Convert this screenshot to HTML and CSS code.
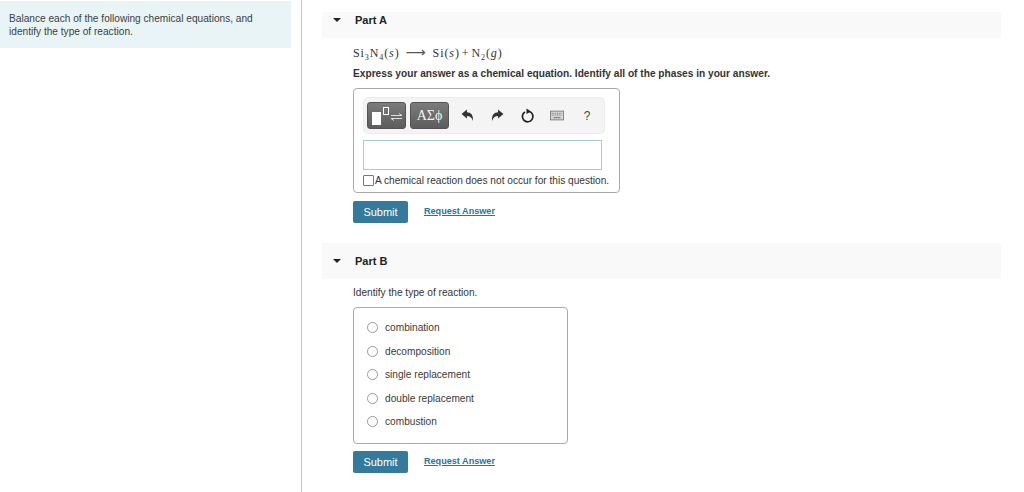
FILE: index.html
```html
<!DOCTYPE html>
<html>
<head>
  <title>Balance Chemical Equations</title>
  <link rel="stylesheet" href="styles.css">
</head>
<body>

<div class="page">
  <div class="sidebar">
    <div class="intro">Balance each of the following chemical equations, and identify the type of reaction.</div>
  </div>

  <div class="main">
    <div class="part-header part-header-a">
      <span class="caret"></span>
      <h3>Part A</h3>
    </div>
    <div class="part-body">
      <p class="equation">Si<sub>3</sub>N<sub>4</sub>(<i>s</i>)<span class="arrow">⟶</span>Si(<i>s</i>)<span class="plus">+</span>N<sub>2</sub>(<i>g</i>)</p>
      <p class="prompt">Express your answer as a chemical equation. Identify all of the phases in your answer.</p>

      <div class="answer-box">
        <div class="toolbar">
          <button class="tool-btn tool-btn-wide">
            <svg width="34" height="18" viewBox="0 0 34 18">
              <rect x="2" y="5" width="9" height="13" fill="#fff"/>
              <rect x="13.5" y="0.5" width="5" height="7" fill="none" stroke="#fff"/>
              <path d="M21 8.500h11l-3-2M32 11.500H21l3 2" fill="none" stroke="#ddd" stroke-width="1"/>
            </svg>
          </button>
          <button class="tool-btn tool-btn-greek">ΑΣϕ</button>
          <span class="tool-icon tool-undo">
            <svg width="13" height="13" viewBox="0 0 12 12"><path d="M0.500 4.500L5.500 0.500V3C9 3 11.500 5.500 11 11C10 8 8.500 6.500 5.500 6.500V8.800Z" fill="#333"/></svg>
          </span>
          <span class="tool-icon tool-redo">
            <svg width="13" height="13" viewBox="0 0 12 12"><path d="M11.500 4.500L6.500 0.500V3C3 3 0.500 5.500 1 11C2 8 3.500 6.500 6.500 6.500V8.800Z" fill="#333"/></svg>
          </span>
          <span class="tool-icon tool-reset">
            <svg width="14" height="16" viewBox="0 0 14 16"><path d="M8.500 3.500A5.300 5.300 0 1 1 4 3.900" fill="none" stroke="#222" stroke-width="1.700"/><path d="M5.500 0.500L10 3.400L5.500 6Z" fill="#222"/></svg>
          </span>
          <span class="tool-icon tool-keys">
            <svg width="16" height="11" viewBox="0 0 16 11"><rect x="0.500" y="0.500" width="15" height="10" fill="#d6d6d6" stroke="#777"/><path d="M2 3h12M2 5h12" stroke="#666" stroke-dasharray="1 1"/><path d="M4 8h8" stroke="#666"/></svg>
          </span>
          <span class="tool-icon tool-help">?</span>
        </div>
        <div class="answer-input"></div>
        <label class="no-reaction"><span class="checkbox"></span>A chemical reaction does not occur for this question.</label>
      </div>

      <div class="actions">
        <button class="submit">Submit</button>
        <a class="request" href="#">Request Answer</a>
      </div>
    </div>

    <div class="part-header part-header-b">
      <span class="caret"></span>
      <h3>Part B</h3>
    </div>
    <div class="part-body">
      <p class="identify">Identify the type of reaction.</p>

      <ul class="choices">
        <li><span class="radio"></span>combination</li>
        <li><span class="radio"></span>decomposition</li>
        <li><span class="radio"></span>single replacement</li>
        <li><span class="radio"></span>double replacement</li>
        <li><span class="radio"></span>combustion</li>
      </ul>

      <div class="actions actions-b">
        <button class="submit">Submit</button>
        <a class="request" href="#">Request Answer</a>
      </div>
    </div>
  </div>
</div>

</body>
</html>
```

FILE: styles.css
```css
body {
  margin: 0;
  font-family: "Liberation Sans", Arial, sans-serif;
  font-size: 10.15px;
  color: #333;
  background-color: #fff;
  overflow: hidden;
}

.page {
  display: flex;
  height: 492px;
}

.sidebar {
  width: 302px;
  flex-shrink: 0;
  padding-top: 1px;
  box-sizing: border-box;
  border-right: 1px solid #c4c8cc;
}

.intro {
  width: 291px;
  height: 47px;
  box-sizing: border-box;
  padding: 12px 30px 0 9px;
  background-color: #e8f4f6;
  line-height: 12.5px;
  color: #3a3f44;
}

.main {
  width: 679px;
  margin-left: 20px;
  padding-top: 12px;
}

.part-header {
  display: flex;
  align-items: flex-start;
  background-color: #f9f9f9;
  padding-left: 11px;
}

.part-header-a {
  height: 26px;
  padding-top: 2px;
  box-sizing: border-box;
}

.part-header-b {
  height: 36px;
  margin-top: 20px;
  padding-top: 12px;
  box-sizing: border-box;
}

.part-header h3 {
  margin: 0 0 0 14px;
  font-size: 11px;
  line-height: 13px;
  color: #222;
}

.caret {
  width: 0;
  height: 0;
  margin-top: 4px;
  border-left: 4px solid transparent;
  border-right: 4px solid transparent;
  border-top: 4px solid #222;
}

.part-body {
  padding-left: 31px;
}

.equation {
  margin: 0;
  padding-top: 8px;
  height: 23px;
  box-sizing: border-box;
  font-family: "Liberation Serif", serif;
  font-size: 12px;
  letter-spacing: 0.9px;
  line-height: 15px;
  color: #333;
  white-space: nowrap;
}

.equation sub {
  font-size: 8px;
  line-height: 0;
}

.arrow {
  display: inline-block;
  width: 20px;
  margin: 0 7px 0 6px;
  font-family: "DejaVu Sans", sans-serif;
  font-size: 14px;
  line-height: 0;
  letter-spacing: 0;
  color: #555;
}

.plus {
  margin: 0 2px;
}

.prompt {
  margin: 0;
  padding-top: 7px;
  font-size: 10.17px;
  font-weight: bold;
  line-height: 12px;
  color: #333;
}

.answer-box {
  width: 267px;
  height: 105px;
  margin-top: 8px;
  padding: 8px 0 0 9px;
  box-sizing: border-box;
  border: 1px solid #aaa;
  border-radius: 4px;
}

.toolbar {
  display: flex;
  align-items: center;
  width: 242px;
  height: 37px;
  box-sizing: border-box;
  padding-left: 3px;
  background-color: #f4f4f4;
  border: 1px solid #ececec;
  border-radius: 5px;
}

.tool-btn {
  height: 27px;
  padding: 0;
  margin-right: 4px;
  border: 1px solid #555;
  border-radius: 3px;
  background: linear-gradient(#7b7b7b, #5d5d5d);
  color: #f2f2f2;
  font-family: "Liberation Serif", serif;
  font-size: 14px;
}

.tool-btn-wide {
  width: 39px;
  display: flex;
  align-items: center;
  justify-content: center;
}

.tool-btn-greek {
  width: 39px;
}

.tool-icon {
  display: flex;
  justify-content: center;
  align-items: center;
  width: 14px;
  color: #444;
}

.tool-undo {
  margin-left: 7px;
}

.tool-redo {
  margin-left: 16px;
}

.tool-reset {
  margin-left: 17px;
}

.tool-keys {
  margin-left: 15px;
}

.tool-help {
  margin-left: 16px;
  font-size: 12px;
}

.answer-input {
  width: 239px;
  height: 30px;
  margin-top: 6px;
  box-sizing: border-box;
  border: 1px solid #a9c9d6;
  background-color: #fff;
}

.no-reaction {
  display: flex;
  align-items: center;
  margin-top: 4px;
  line-height: 13px;
  color: #333;
  white-space: nowrap;
}

.checkbox {
  width: 9px;
  height: 9px;
  margin-right: 1px;
  border: 1px solid #777;
  border-radius: 1px;
  background-color: #fff;
}

.actions {
  display: flex;
  align-items: center;
  margin-top: 8px;
}

.submit {
  width: 55px;
  height: 22px;
  padding: 0;
  border: none;
  border-radius: 2px;
  background-color: #337a9c;
  color: #fff;
  font-family: "Liberation Sans", Arial, sans-serif;
  font-size: 11px;
}

.request {
  margin-left: 16px;
  margin-top: -2px;
  color: #2a7397;
  font-size: 9.1px;
  font-weight: bold;
}

.identify {
  margin: 0;
  padding-top: 7px;
  line-height: 13px;
}

.choices {
  list-style: none;
  width: 215px;
  height: 137px;
  margin: 8px 0 0;
  padding: 8px 0 0 13px;
  box-sizing: border-box;
  border: 1px solid #aaa;
  border-radius: 4px;
}

.choices li {
  display: flex;
  align-items: center;
  height: 23.500px;
  color: #3a3a3a;
}

.radio {
  width: 9px;
  height: 9px;
  margin-right: 7px;
  border: 1px solid #999;
  border-radius: 50%;
  background-color: #fff;
}

.actions-b {
  margin-top: 7px;
}
```
